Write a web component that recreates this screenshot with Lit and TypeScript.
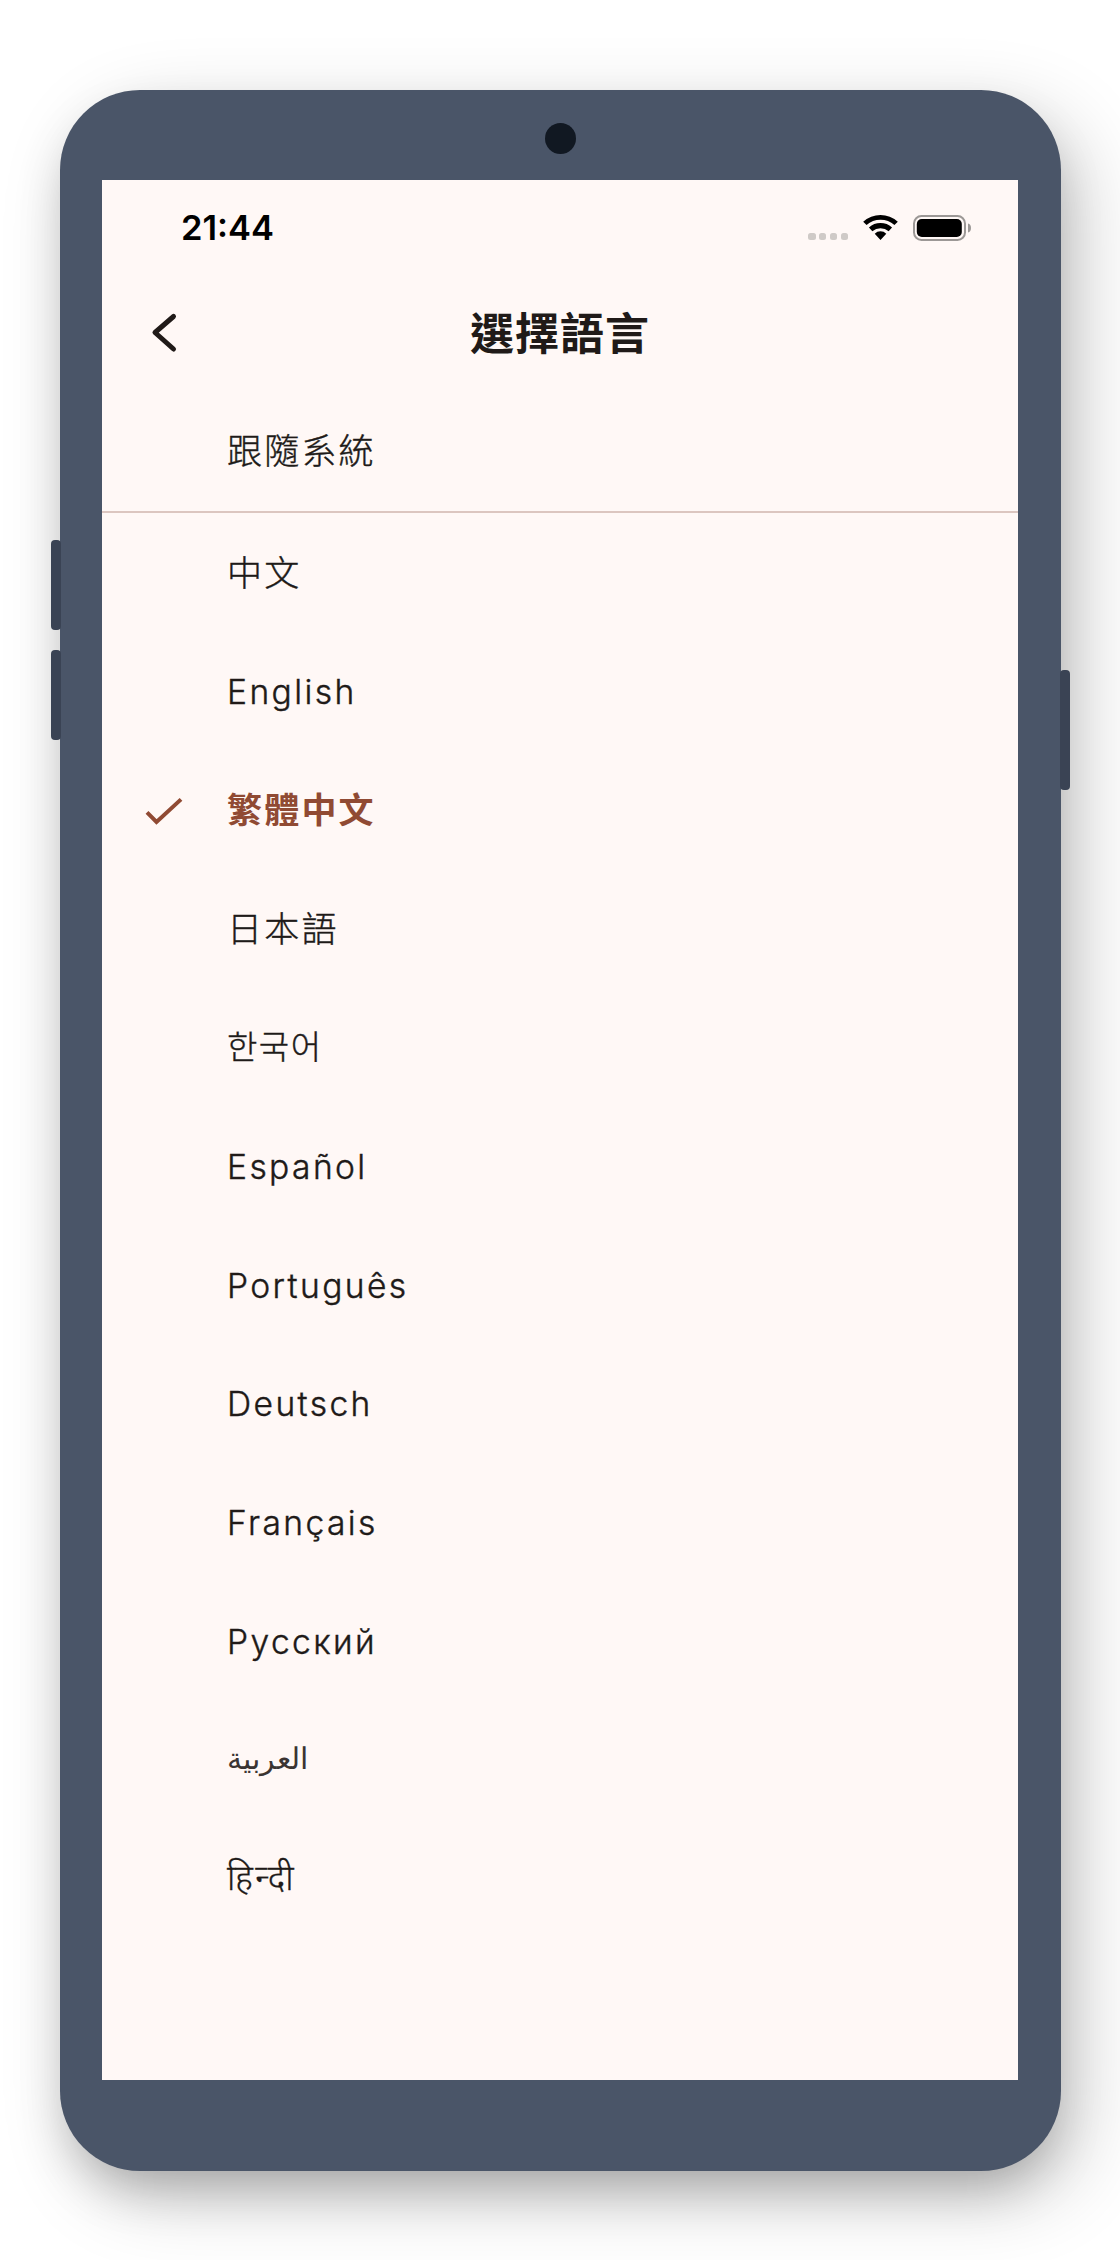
import { LitElement, html, css } from "lit";
import { customElement } from "lit/decorators.js";

const LANGS = [
  { t: "中文", c: "cjk" },
  { t: "English", c: "" },
  { t: "繁體中文", c: "cjk sel" },
  { t: "日本語", c: "cjk" },
  { t: "한국어", c: "ko" },
  { t: "Español", c: "" },
  { t: "Português", c: "" },
  { t: "Deutsch", c: "" },
  { t: "Français", c: "" },
  { t: "Русский", c: "" },
  { t: "العربية", c: "ar" },
  { t: "हिन्दी", c: "hi" },
];

@customElement("app-root")
export class AppRoot extends LitElement {
  static styles = css`
    :host { display: block; width: 1120px; height: 2260px; background: #fff; font-family: Inter, "Noto Sans CJK TC", "Noto Sans", sans-serif; overflow: hidden; }
    .stage { padding: 90px 59px 89px 60px; }
    .phone { position: relative; width: 1001px; height: 2081px; box-sizing: border-box; padding: 90px 43px 91px 42px; background: #4a5568; border-radius: 80px; box-shadow: 0 25px 50px -12px rgba(0,0,0,.25), 20px 25px 80px rgba(0,0,0,.2); }
    .btn { position: absolute; width: 10px; background: #3a4354; border-radius: 4px; }
    .btn.l { left: -9px; }
    .btn.r { right: -9px; top: 580px; height: 120px; }
    .b1 { top: 450px; height: 90px; }
    .b2 { top: 560px; height: 90px; }
    .camera { position: absolute; left: 485px; top: 33px; width: 31px; height: 31px; border-radius: 50%; background: #111822; }
    .screen { width: 916px; height: 1900px; background: #fff8f6; color: #201a18; display: flex; flex-direction: column; }
    .status { height: 95px; display: flex; align-items: center; justify-content: space-between; padding: 0 47px 0 79px; }
    .time { font-size: 34.500px; font-weight: 600; color: #000; }
    .sys { display: flex; align-items: center; gap: 15px; }
    .dots { display: flex; gap: 3.300px; margin-top: 18px; }
    .dots i { width: 7.500px; height: 7.500px; border-radius: 2.500px; background: #cfcac7; }
    .head { height: 117px; position: relative; display: flex; align-items: center; justify-content: center; padding-bottom: 6px; box-sizing: border-box; }
    .back { position: absolute; left: 47px; top: 35px; }
    .title { font-size: 44px; font-weight: 700; letter-spacing: 1px; }
    .row { height: 118.800px; box-sizing: border-box; display: flex; align-items: center; padding-left: 125px; position: relative; font-size: 33.600px; font-weight: 300; letter-spacing: 2.400px; -webkit-text-stroke: .4px #201a18; }
    .row.cjk { font-size: 35px; letter-spacing: 2.200px; padding-bottom: 4px; }
    .row.first { height: 121px; border-bottom: 2px solid #dcc6c0; padding-bottom: 6px; }
    .row.sel { color: #904a33; font-weight: 700; -webkit-text-stroke: 0; }
    .row.ko { font-size: 33px; letter-spacing: 1.500px; font-family: "Noto Sans CJK KR", sans-serif; padding-bottom: 5px; }
    .row.ar { font-size: 29.500px; letter-spacing: 0; padding-bottom: 5px; color: #3a3432; -webkit-text-stroke: 0; }
    .row.hi { font-size: 34.500px; padding-bottom: 5px; -webkit-text-stroke: .3px #201a18; }
    .check { position: absolute; left: 41px; top: 39px; }
  `;
  render() {
    return html`<div class="stage"><div class="phone">
      <div class="btn l b1"></div><div class="btn l b2"></div><div class="btn r"></div>
      <div class="camera"></div>
      <div class="screen">
        <div class="status">
          <span class="time">21:44</span>
          <div class="sys">
            <div class="dots"><i></i><i></i><i></i><i></i></div>
            <svg width="35" height="25" viewBox="0 0 36 26"><path d="M18 26l-6-6.500a8.500 8.500 0 0 1 12 0zM9.500 17l-3.500-4a18 18 0 0 1 24 0l-3.500 4a13 13 0 0 0-17 0zM3.500 10.500L0 7a27 27 0 0 1 36 0l-3.500 3.500a22 22 0 0 0-29 0z" fill="#000"/></svg>
            <svg width="58" height="26" viewBox="0 0 58 26"><rect x="1" y="1" width="51" height="24" rx="7.500" fill="none" stroke="#9c9896" stroke-width="2"/><rect x="3.800" y="4" width="45" height="18" rx="5" fill="#000"/><path d="M55 8.500c2 .5 3 2 3 4.500s-1 4-3 4.500z" fill="#9c9896"/></svg>
          </div>
        </div>
        <div class="head">
          <svg class="back" width="32" height="44" viewBox="0 0 32 44"><path d="M24.500 6.500L6 22.500l18.500 16.500" fill="none" stroke="#201a18" stroke-width="5" stroke-linecap="round" stroke-linejoin="round"/></svg>
          <span class="title">選擇語言</span>
        </div>
        <div class="row first cjk">跟隨系統</div>
        ${LANGS.map((l, i) => html`<div class="row ${l.c}">
          ${i === 2 ? html`<svg class="check" width="42" height="40" viewBox="0 0 42 40"><path d="M4 22.400L13.500 31.900L38 9.400" fill="none" stroke="#904a33" stroke-width="4"/></svg>` : ""}
          ${l.t}</div>`)}
      </div>
    </div></div>`;
  }
}
